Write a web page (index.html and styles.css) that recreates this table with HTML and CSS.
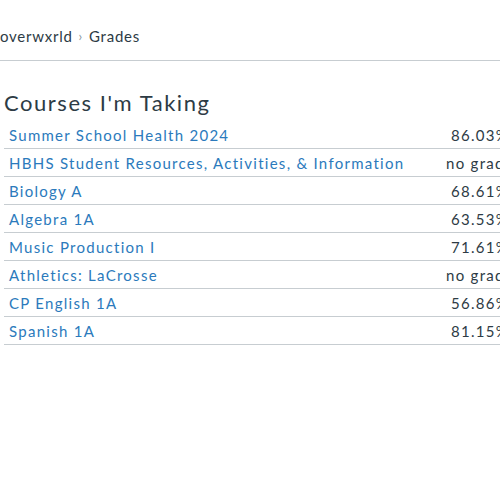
FILE: index.html
```html
<!DOCTYPE html>
<html>
<head>
<meta charset="utf-8">
<link rel="stylesheet" href="styles.css">
</head>
<body>
<nav class="crumbs">
  <span class="crumb">overwxrld</span>
  <span class="sep">›</span>
  <span class="crumb">Grades</span>
</nav>
<main class="content">
  <h1 class="title">Courses I'm Taking</h1>
  <table class="courses">
    <tbody>
      <tr><td class="course"><a href="#">Summer School Health 2024</a></td><td class="grade">86.03%</td></tr>
      <tr><td class="course"><a href="#">HBHS Student Resources, Activities, &amp; Information</a></td><td class="grade">no grade</td></tr>
      <tr><td class="course"><a href="#">Biology A</a></td><td class="grade">68.61%</td></tr>
      <tr><td class="course"><a href="#">Algebra 1A</a></td><td class="grade">63.53%</td></tr>
      <tr><td class="course"><a href="#">Music Production I</a></td><td class="grade">71.61%</td></tr>
      <tr><td class="course"><a href="#">Athletics: LaCrosse</a></td><td class="grade">no grade</td></tr>
      <tr><td class="course"><a href="#">CP English 1A</a></td><td class="grade">56.86%</td></tr>
      <tr><td class="course"><a href="#">Spanish 1A</a></td><td class="grade">81.15%</td></tr>
    </tbody>
  </table>
</main>
</body>
</html>
```
FILE: styles.css
```css
html, body {
  margin: 0;
  padding: 0;
  background: #fff;
  overflow: hidden;
}
body {
  font-family: Lato, "Open Sans", sans-serif;
  color: #2d3b45;
  width: 500px;
}
.crumbs {
  height: 61px;
  box-sizing: border-box;
  border-bottom: 1px solid #c7cdd1;
  display: flex;
  align-items: center;
  gap: 6px;
  padding: 11px 0 0 0;
  font-size: 15px;
  letter-spacing: 0.05em;
  white-space: nowrap;
}
.sep {
  color: #8b969e;
  font-size: 13px;
}
.content {
  padding: 0 0 0 4px;
}
.title {
  font-size: 22px;
  font-weight: 400;
  letter-spacing: 0.07em;
  margin: 28px 0 4px 0;
  line-height: 28px;
}
.courses {
  border-collapse: collapse;
  width: 526px;
  font-size: 15px;
  letter-spacing: 0.085em;
}
.courses td {
  border-bottom: 1px solid #c7cdd1;
  height: 27px;
  padding: 0 5px;
  white-space: nowrap;
}
.course a {
  color: #2b7abc;
  text-decoration: none;
}
.grade {
  width: 90px;
  text-align: center;
}
```
